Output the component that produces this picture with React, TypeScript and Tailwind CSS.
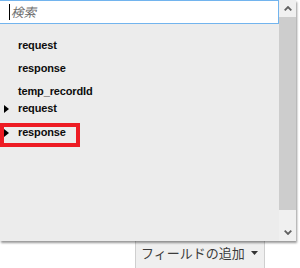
export default function App() {
  const Tri = () => (
    <svg width="5" height="8" viewBox="0 0 5 8" className="mt-[1px] shrink-0">
      <polygon points="0,0 5,4 0,8" fill="#000" />
    </svg>
  );
  return (
    <div className="relative w-[300px] h-[268px] bg-white overflow-hidden">
      {/* button underneath the dropdown */}
      <div className="pt-[236px] pl-[135px]">
        <div className="flex items-center w-[130px] h-[34px] border border-[#cfcfcf] bg-[#efefef] pl-[5px] pr-[6px] pb-[2px]">
          <span className="text-[13px] leading-none text-[#3c3c3c] font-['Noto_Sans_CJK_JP',sans-serif]">
            フィールドの追加
          </span>
          <svg width="7" height="4" viewBox="0 0 7 4" className="ml-auto mt-[2px]">
            <polygon points="0,0 7,0 3.5,4" fill="#333" />
          </svg>
        </div>
      </div>

      {/* dropdown panel */}
      <div className="absolute left-0 top-0 w-[296px] h-[241px] bg-[#ececec] flex shadow-[1px_2px_2px_rgba(0,0,0,0.4)]">
        <div className="w-[279px] flex flex-col">
          <div className="h-[24px] bg-white border-t border-b border-r border-[#72b4ee] flex items-center pl-[9px]">
            <div className="w-px h-[16px] bg-black" />
            <span className="ml-[1px] italic text-[12.5px] leading-none text-[#6d6d6d] font-['Noto_Sans_CJK_JP',sans-serif]">
              検索
            </span>
          </div>
          <div className="pt-[13px] font-['Liberation_Sans',sans-serif] font-bold text-[11px] leading-[16px] tracking-[-0.15px] text-[#0d0d0d]">
            <div className="h-[23px] pl-[18px]">request</div>
            <div className="h-[23px] pl-[18px]">response</div>
            <div className="h-[17px] pl-[18px]">temp_recordId</div>
            <div className="h-[24px] pl-[4px] flex items-start">
              <div className="h-[16px] flex items-center">
                <Tri />
              </div>
              <span className="ml-[9px]">request</span>
            </div>
            <div className="h-[16px] pl-[4px] flex items-start">
              <div className="h-[16px] flex items-center">
                <Tri />
              </div>
              <span className="ml-[9px]">response</span>
            </div>
          </div>
        </div>
        <div className="w-[17px] flex flex-col bg-[#f0f0f0]">
          <div className="h-[17px] flex items-center justify-center">
            <svg width="8" height="5" viewBox="0 0 8 5">
              <polyline points="0.7,4.3 4,1 7.3,4.3" fill="none" stroke="#606060" strokeWidth="1.8" />
            </svg>
          </div>
          <div className="h-[193px] bg-[#cdcdcd]" />
          <div className="flex-1" />
          <div className="h-[17px] flex items-center justify-center">
            <svg width="8" height="5" viewBox="0 0 8 5">
              <polyline points="0.7,0.7 4,4 7.3,0.7" fill="none" stroke="#606060" strokeWidth="1.8" />
            </svg>
          </div>
        </div>
      </div>

      {/* red highlight annotation */}
      <div className="absolute left-0 top-[123px] w-[80px] h-[24px] border-4 border-[#ed1c24]" />
    </div>
  );
}
